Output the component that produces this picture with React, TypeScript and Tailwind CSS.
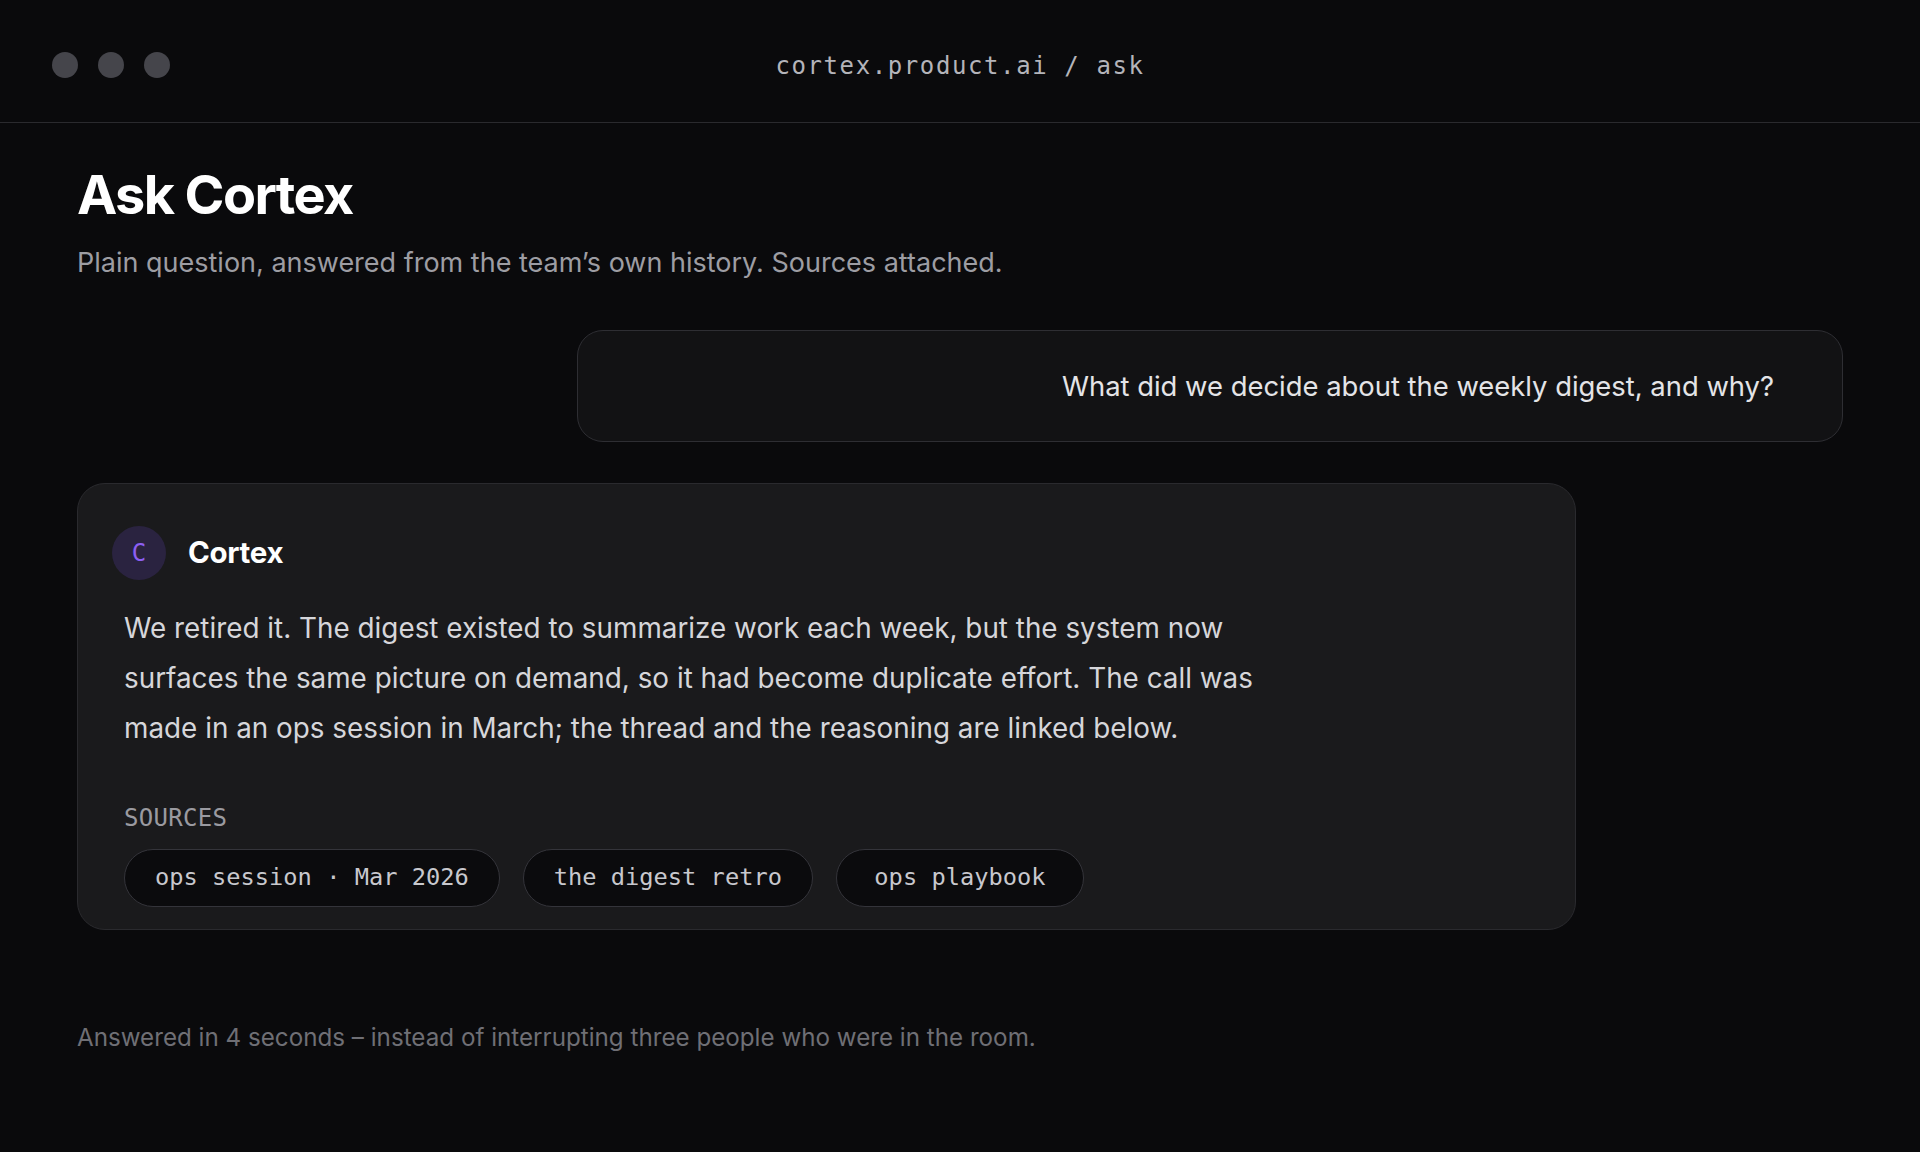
export default function App() {
  const sources = ["ops session · Mar 2026", "the digest retro", "ops playbook"];
  return (
    <div className="min-h-screen bg-[#0a0a0c] font-['Inter',sans-serif] text-[#e4e4e7]">
      {/* window chrome */}
      <header className="grid h-[123px] grid-cols-[1fr_auto_1fr] items-center border-b border-[#2a2a2e] px-[52px] pt-[7px]">
        <div className="flex gap-[20px]">
          <span className="h-[26px] w-[26px] rounded-full bg-[#45454b]" />
          <span className="h-[26px] w-[26px] rounded-full bg-[#45454b]" />
          <span className="h-[26px] w-[26px] rounded-full bg-[#45454b]" />
        </div>
        <div className="pt-[2px] font-['DejaVu_Sans_Mono',monospace] text-[24px] tracking-[1.6px] text-[#b4b4ba]">
          cortex.product.ai / ask
        </div>
        <div />
      </header>

      <main className="px-[77px]">
        <h1 className="mt-[45px] text-[54px] font-bold leading-none tracking-[-0.03em] text-white">
          Ask Cortex
        </h1>
        <p className="mt-[25px] text-[27px] leading-[1.2] text-[#9d9da3]">
          Plain question, answered from the team’s own history. Sources attached.
        </p>

        {/* user question */}
        <div className="mt-[51px] flex justify-end">
          <div className="flex h-[112px] w-[1266px] items-center justify-end rounded-[26px] border border-[#2e2e33] bg-[#121214] pr-[68px]">
            <span className="text-[27.4px] text-[#e4e4e7]">
              What did we decide about the weekly digest, and why?
            </span>
          </div>
        </div>

        {/* answer card */}
        <section className="mt-[41px] w-[1499px] rounded-[28px] border border-[#2a2a2e] bg-[#1a1a1c] px-[34px] pt-[42px] pb-[22px]">
          <div className="flex items-center gap-[22px]">
            <div className="flex h-[54px] w-[54px] items-center justify-center rounded-full bg-[#2a2340] font-['DejaVu_Sans_Mono',monospace] text-[24px] text-[#8d5ff2]">
              C
            </div>
            <span className="pb-[2px] text-[29.5px] font-bold tracking-[-0.01em] text-white">Cortex</span>
          </div>
          <div className="pl-[12px]">
            <p className="mt-[23px] whitespace-nowrap text-[27.85px] leading-[50px] text-[#d6d6da]">
              We retired it. The digest existed to summarize work each week, but the system now
              <br />
              surfaces the same picture on demand, so it had become duplicate effort. The call was
              <br />
              made in an ops session in March; the thread and the reasoning are linked below.
            </p>
            <div className="mt-[51px] font-['DejaVu_Sans_Mono',monospace] text-[24px] leading-[1.2] tracking-[0.3px] text-[#9a9aa0]">
              SOURCES
            </div>
            <div className="mt-[16px] flex gap-[23px]">
              {sources.map((s) => (
                <span
                  key={s}
                  className="flex h-[58px] min-w-[248px] items-center justify-center rounded-full border border-[#34343a] bg-[#0b0b0d] px-[30px] font-['DejaVu_Sans_Mono',monospace] text-[23.7px] text-[#c8c8cd]"
                >
                  {s}
                </span>
              ))}
            </div>
          </div>
        </section>

        <p className="mt-[93px] text-[24.2px] leading-[1.2] text-[#6f6f75]">
          Answered in 4 seconds – instead of interrupting three people who were in the room.
        </p>
      </main>
    </div>
  );
}
